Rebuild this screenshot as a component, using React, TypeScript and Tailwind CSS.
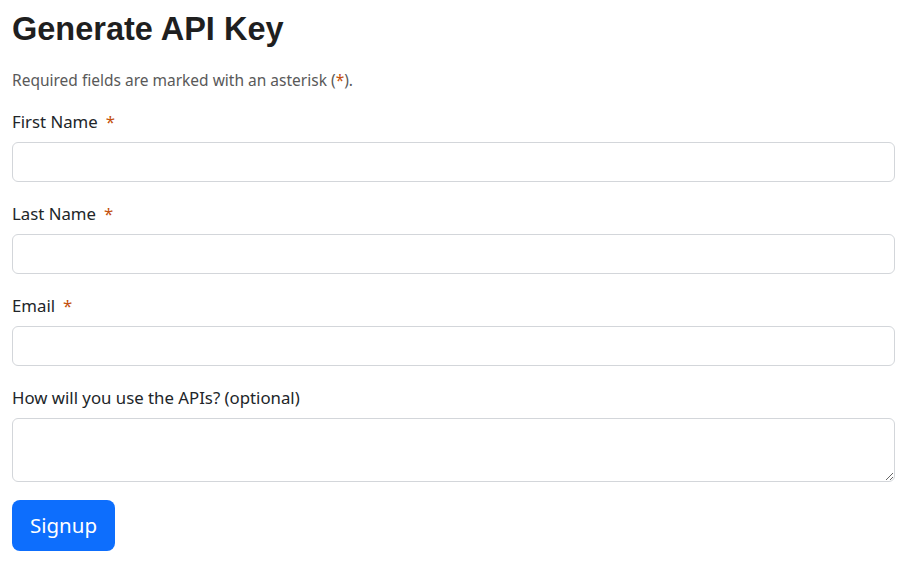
const Star = () => <span className="ml-[8px] text-[#c4510c]">*</span>

const Field = ({ label, required, tall }: { label: string; required?: boolean; tall?: boolean }) => (
  <div className="mb-[20px]">
    <label className="mb-[8px] block h-[24px] text-[16.8px] leading-[24px]">
      {label}
      {required && <Star />}
    </label>
    {tall ? (
      <textarea className="block h-[64px] w-full rounded-[6px] border border-[#d3d6da] bg-white outline-none" />
    ) : (
      <input className="block h-[40px] w-full rounded-[6px] border border-[#d3d6da] bg-white outline-none" />
    )}
  </div>
)

export default function App() {
  return (
    <div className="min-h-[569px] bg-white pl-[12px] pr-[16px] pt-[5.5px] font-['Noto_Sans',sans-serif] text-[15px] text-[#212529]">
      <h1 className="font-['Liberation_Sans',Arial,sans-serif] text-[32.5px] font-bold leading-[46px] text-[#1f1f1f]">
        Generate API Key
      </h1>
      <p className="mt-[16px] mb-[18px] h-[24px] text-[15.5px] leading-[24px] text-[#595959]">
        Required fields are marked with an asterisk (<span className="text-[#c4510c]">*</span>).
      </p>
      <Field label="First Name" required />
      <Field label="Last Name" required />
      <Field label="Email" required />
      <Field label="How will you use the APIs? (optional)" tall />
      <button className="-mt-[2px] h-[51px] w-[103px] rounded-[8px] bg-[#0d6efd] text-[20.5px] text-white">
        Signup
      </button>
    </div>
  )
}
